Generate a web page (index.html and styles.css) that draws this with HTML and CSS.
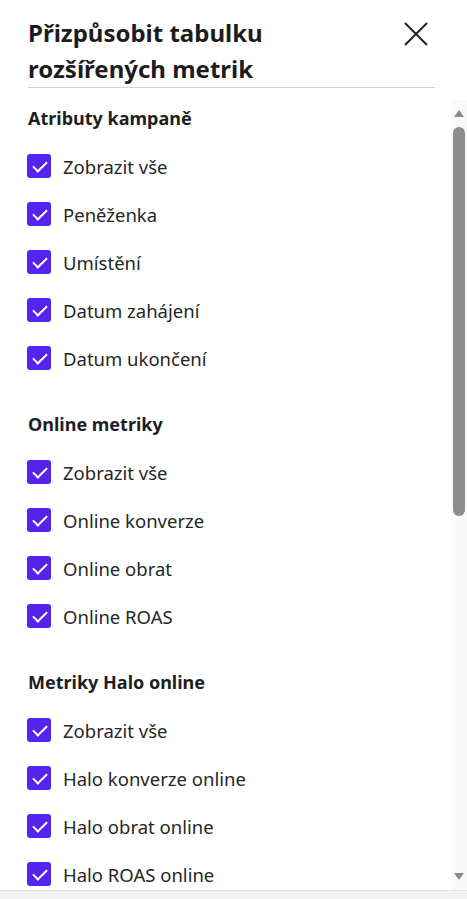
FILE: index.html
```html
<!DOCTYPE html>
<html lang="cs">
<head>
<meta charset="utf-8">
<link rel="stylesheet" href="styles.css">
</head>
<body>
<div class="panel">
  <div class="header">
    <h1 class="title">Přizpůsobit tabulku rozšířených metrik</h1>
    <button class="close" aria-label="Zavřít">
      <svg width="24" height="24" viewBox="0 0 24 24"><path d="M1 1 L23 23 M23 1 L1 23" stroke="#222" stroke-width="2" fill="none"/></svg>
    </button>
  </div>
  <div class="body">
    <div class="list">
      <section class="group">
        <h2 class="group-title">Atributy kampaně</h2>
        <label class="row"><span class="cb"></span><span>Zobrazit vše</span></label>
        <label class="row"><span class="cb"></span><span>Peněženka</span></label>
        <label class="row"><span class="cb"></span><span>Umístění</span></label>
        <label class="row"><span class="cb"></span><span>Datum zahájení</span></label>
        <label class="row"><span class="cb"></span><span>Datum ukončení</span></label>
      </section>
      <section class="group">
        <h2 class="group-title">Online metriky</h2>
        <label class="row"><span class="cb"></span><span>Zobrazit vše</span></label>
        <label class="row"><span class="cb"></span><span>Online konverze</span></label>
        <label class="row"><span class="cb"></span><span>Online obrat</span></label>
        <label class="row"><span class="cb"></span><span>Online ROAS</span></label>
      </section>
      <section class="group">
        <h2 class="group-title">Metriky Halo online</h2>
        <label class="row"><span class="cb"></span><span>Zobrazit vše</span></label>
        <label class="row"><span class="cb"></span><span>Halo konverze online</span></label>
        <label class="row"><span class="cb"></span><span>Halo obrat online</span></label>
        <label class="row"><span class="cb"></span><span>Halo ROAS online</span></label>
      </section>
    </div>
    <div class="scrollbar">
      <span class="arrow up"></span>
      <span class="thumb"></span>
      <span class="track-fill"></span>
      <span class="arrow down"></span>
    </div>
  </div>
  <div class="footer"></div>
</div>
</body>
</html>
```

FILE: styles.css
```css
* { box-sizing: border-box; }
html, body { margin: 0; padding: 0; }
body {
  width: 467px;
  height: 899px;
  overflow: hidden;
  background: #fff;
  font-family: "Noto Sans", Lato, sans-serif;
  color: #222;
}
.panel {
  display: flex;
  flex-direction: column;
  height: 899px;
}
.header {
  display: flex;
  justify-content: space-between;
  align-items: flex-start;
  margin: 0 32px 0 28px;
  padding-top: 15px;
  border-bottom: 1px solid #d2d2d2;
}
.title {
  margin: 0;
  width: 330px;
  font-size: 24px;
  line-height: 36px;
  font-weight: 700;
  color: #1c1c1c;
}
.close {
  border: 0;
  background: none;
  padding: 0;
  margin: 7px 7px 0 0;
  width: 24px;
  height: 24px;
  display: block;
}
.close svg { display: block; }
.body {
  flex: 1;
  display: flex;
  margin-top: 12px;
  min-height: 0;
}
.list {
  flex: 1;
  overflow: hidden;
  padding: 6px 0 0 27px;
}
.group + .group { margin-top: 30px; }
.group-title {
  margin: 0 0 12px 1px;
  font-size: 18px;
  line-height: 24px;
  font-weight: 700;
  color: #1e1e1e;
}
.row {
  display: flex;
  align-items: center;
  height: 48px;
  gap: 12px;
  font-size: 18.5px;
  color: #262626;
}
.cb {
  width: 24px;
  height: 24px;
  flex: none;
  border-radius: 3px;
  background: #5522ee;
  position: relative;
}
.cb::after {
  content: "";
  position: absolute;
  left: 6px;
  top: 7px;
  width: 12px;
  height: 6px;
  border-left: 2.5px solid #fff;
  border-bottom: 2.5px solid #fff;
  transform: rotate(-45deg);
  transform-origin: center;
}
.scrollbar {
  width: 16px;
  flex: none;
  background: #f9f9f9;
  display: flex;
  flex-direction: column;
  align-items: center;
}
.arrow {
  display: block;
  width: 0;
  height: 0;
  border-left: 5px solid transparent;
  border-right: 5px solid transparent;
}
.arrow.up {
  margin-top: 10px;
  border-bottom: 7px solid #8a8a8a;
}
.thumb {
  display: block;
  margin-top: 10px;
  width: 12px;
  height: 389px;
  border-radius: 6px;
  background: #8d8d8d;
}
.track-fill { flex: 1; }
.arrow.down {
  margin-bottom: 10px;
  border-top: 7px solid #8a8a8a;
}
.footer {
  height: 9px;
  flex: none;
  background: #f1f1f1;
  border-top: 1px solid #e3e3e3;
}
```
